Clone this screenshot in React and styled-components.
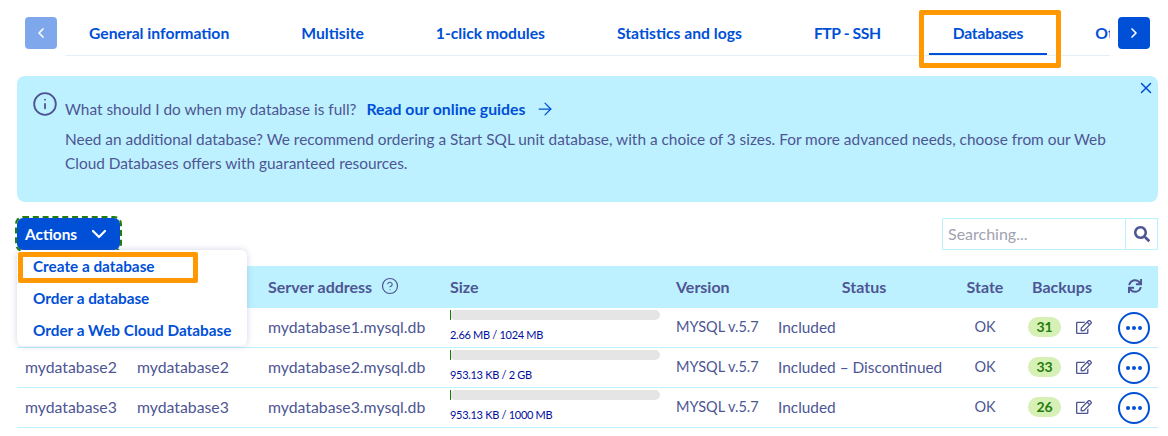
import * as React from "react";
import styled, { createGlobalStyle } from "styled-components";
import { ChevronLeft, ChevronRight, ChevronDown, ArrowRight, Info, X, CircleHelp } from "lucide-react";
import { FaSearch, FaSync, FaRegEdit } from "react-icons/fa";

const TABS = [
  { label: "General information" },
  { label: "Multisite" },
  { label: "1-click modules" },
  { label: "Statistics and logs" },
  { label: "FTP - SSH", tight: "-0.4px" },
  { label: "Databases", tight: "-0.2px", active: true },
  { label: "Other" },
];

const ROWS = [
  { name: "mydatabase1", user: "mydatabase1", server: "mydatabase1.mysql.db", size: "2.66 MB / 1024 MB", status: "Included", backups: 31 },
  { name: "mydatabase2", user: "mydatabase2", server: "mydatabase2.mysql.db", size: "953.13 KB / 2 GB", status: "Included – Discontinued", backups: 33 },
  { name: "mydatabase3", user: "mydatabase3", server: "mydatabase3.mysql.db", size: "953.13 KB / 1000 MB", status: "Included", backups: 26 },
];

const GlobalStyle = createGlobalStyle`
  html, body {
    margin: 0;
    padding: 0;
    background: #fff;
    font-family: "Lato", "Noto Sans", sans-serif;
    color: #4d5693;
  }
`;

const Page = styled.div`
  position: relative;
  width: 1168px;
  height: 436px;
  overflow: hidden;
  box-sizing: border-box;
  padding: 17px 10px 0 17px;
`;

const TabBar = styled.div`
  display: flex;
  align-items: flex-start;
  gap: 8px;
  padding: 0 8px;
`;

const ArrowButton = styled.button`
  flex: none;
  width: 32px;
  height: 32px;
  display: flex;
  align-items: center;
  justify-content: center;
  padding: 0;
  border: none;
  border-radius: 4px;
  color: #fff;
  background: ${(p) => (p.$disabled ? "#7fa7eb" : "#0050d7")};
`;

const TabList = styled.div`
  flex: 1;
  min-width: 0;
  display: flex;
  gap: 24px;
  height: 39px;
  box-sizing: border-box;
  overflow: hidden;
  border-bottom: 1px solid #e6eff5;
`;

const Tab = styled.div`
  flex: none;
  height: 38px;
  box-sizing: border-box;
  padding: 0 24px;
  line-height: 32px;
  font-size: 15.7px;
  font-weight: 700;
  letter-spacing: ${(p) => p.$tight || "normal"};
  color: #0050d7;
  border-bottom: 2px solid ${(p) => (p.$active ? "#0050d7" : "transparent")};
`;

const TabHighlight = styled.div`
  position: absolute;
  left: 919px;
  top: 10px;
  width: 142px;
  height: 58px;
  box-sizing: border-box;
  border: 5px solid #ff9802;
  border-radius: 2px;
`;

const Banner = styled.div`
  position: relative;
  display: flex;
  gap: 7px;
  height: 126px;
  box-sizing: border-box;
  margin-top: 20px;
  padding: 15px 15px 0;
  background: #bef1ff;
  border-radius: 8px;
  font-size: 15.4px;
  line-height: 24px;
`;

const BannerBody = styled.div`
  flex: 1;
  padding-top: 6px;
`;

const BannerLead = styled.div`
  display: flex;
  align-items: center;
  gap: 10px;
  margin-bottom: 6px;
`;

const GuideLink = styled.a`
  display: inline-flex;
  align-items: center;
  gap: 10px;
  color: #0050d7;
  font-size: 15.8px;
  font-weight: 700;
`;

const BannerText = styled.p`
  margin: 0;
  width: 1060px;
`;

const CloseButton = styled.span`
  position: absolute;
  top: 3px;
  right: 3px;
  display: flex;
  color: #0050d7;
`;

const Toolbar = styled.div`
  display: flex;
  justify-content: space-between;
  align-items: center;
  margin-top: 16px;
`;

const ActionsWrap = styled.div`
  position: relative;
`;

const ActionsButton = styled.button`
  display: flex;
  align-items: center;
  gap: 10px;
  height: 32px;
  width: 103px;
  box-sizing: border-box;
  padding: 0 8px;
  border: none;
  border-radius: 6px;
  background: #0050d7;
  color: #fff;
  font-family: inherit;
  font-size: 15.4px;
  font-weight: 700;
  outline: 2px dashed #237d0d;
  outline-offset: 0;
`;

const Menu = styled.div`
  position: absolute;
  z-index: 2;
  top: 32px;
  left: 0;
  width: 230px;
  height: 96px;
  box-sizing: border-box;
  padding-top: 1px;
  background: #fff;
  border-radius: 6px;
  box-shadow: 0 0 6px rgba(77, 86, 147, 0.25);
`;

const MenuItem = styled.div`
  height: 32px;
  padding-left: 16px;
  line-height: 30px;
  font-size: 15.3px;
  font-weight: 700;
  color: #0050d7;
  white-space: nowrap;
`;

const MenuHighlight = styled.div`
  position: absolute;
  left: 1px;
  top: 2px;
  width: 180px;
  height: 31px;
  box-sizing: border-box;
  border: 5px solid #ff9802;
  border-radius: 2px;
`;

const SearchBox = styled.div`
  display: flex;
  width: 216px;
  height: 32px;
  box-sizing: border-box;
  border: 1px solid #bef1ff;
`;

const SearchInput = styled.input`
  flex: 1;
  min-width: 0;
  padding: 0 5px 2px;
  border: none;
  outline: none;
  font-family: inherit;
  font-size: 16px;
  color: #4d5693;
  &::placeholder {
    color: #a0a3b0;
    opacity: 1;
  }
`;

const SearchButton = styled.span`
  flex: none;
  width: 31px;
  display: flex;
  align-items: center;
  justify-content: center;
  border-left: 1px solid #bef1ff;
  color: #4d5693;
`;

const Table = styled.table`
  width: 100%;
  margin-top: 16px;
  table-layout: fixed;
  border-collapse: separate;
  border-spacing: 0;
  font-size: 15.8px;
`;

const HeadRow = styled.tr`
  height: 42px;
  background: #bef1ff;
`;

const HeadCell = styled.th`
  padding: 0 8px 2px;
  font-size: 16px;
  font-weight: 700;
  text-align: ${(p) => p.$align || "left"};
`;

const HeadLabel = styled.span`
  display: inline-flex;
  align-items: center;
  gap: 9px;
`;

const Row = styled.tr`
  height: 40px;
`;

const Cell = styled.td`
  box-sizing: border-box;
  padding: 0 8px 2px;
  white-space: nowrap;
  font-size: ${(p) => p.$size || "inherit"};
  text-align: ${(p) => p.$align || "left"};
  border-bottom: 1px solid #bef1ff;
`;

const SizeCell = styled(Cell)`
  vertical-align: top;
`;

const Bar = styled.div`
  height: 10px;
  margin-top: 2px;
  background: #e5e5e5;
  border-radius: 5px;
`;

const BarFill = styled.div`
  height: 100%;
  background: #237d0d;
`;

const SizeText = styled.div`
  margin-top: 7px;
  font-size: 11px;
  letter-spacing: -0.3px;
  line-height: 16px;
  color: #000e9c;
`;

const BackupRow = styled.div`
  display: flex;
  align-items: center;
  justify-content: flex-end;
  gap: 15px;
  padding-right: 12px;
`;

const Badge = styled.span`
  display: inline-block;
  width: 33px;
  height: 20px;
  line-height: 20px;
  text-align: center;
  border-radius: 10px;
  background: #d7f0b5;
  color: #237d0d;
  font-size: 14px;
  font-weight: 700;
`;

const ActionCell = styled(Cell)`
  padding: 0 0 0 6px;
`;

const RoundButton = styled.button`
  width: 32px;
  height: 32px;
  display: flex;
  align-items: center;
  justify-content: center;
  gap: 2px;
  padding: 0;
  background: #fff;
  border: 2px solid #0050d7;
  border-radius: 50%;
`;

const Dot = styled.i`
  width: 4px;
  height: 4px;
  border-radius: 50%;
  background: #0050d7;
`;

export default function App() {
  return (
    <Page>
      <GlobalStyle />
      <TabBar>
        <ArrowButton $disabled aria-label="Previous">
          <ChevronLeft size={16} strokeWidth={2.5} />
        </ArrowButton>
        <TabList>
          {TABS.map((t) => (
            <Tab key={t.label} $active={t.active} $tight={t.tight}>{t.label}</Tab>
          ))}
        </TabList>
        <ArrowButton aria-label="Next">
          <ChevronRight size={16} strokeWidth={2.5} />
        </ArrowButton>
      </TabBar>
      <TabHighlight />

      <Banner>
        <Info size={26} strokeWidth={1.7} />
        <BannerBody>
          <BannerLead>
            <span>What should I do when my database is full?</span>
            <GuideLink>
              Read our online guides <ArrowRight size={20} strokeWidth={1.5} />
            </GuideLink>
          </BannerLead>
          <BannerText>
            Need an additional database? We recommend ordering a Start SQL unit database, with a choice of 3 sizes. For more advanced needs, choose from our Web Cloud Databases offers with guaranteed resources.
          </BannerText>
        </BannerBody>
        <CloseButton><X size={18} strokeWidth={2} /></CloseButton>
      </Banner>

      <Toolbar>
        <ActionsWrap>
          <ActionsButton>
            Actions <ChevronDown size={24} strokeWidth={2.2} />
          </ActionsButton>
          <Menu>
            <MenuItem>Create a database</MenuItem>
            <MenuItem>Order a database</MenuItem>
            <MenuItem>Order a Web Cloud Database</MenuItem>
            <MenuHighlight />
          </Menu>
        </ActionsWrap>
        <SearchBox>
          <SearchInput placeholder="Searching..." />
          <SearchButton><FaSearch size={16} /></SearchButton>
        </SearchBox>
      </Toolbar>

      <Table>
        <colgroup>
          <col style={{ width: 112 }} />
          <col style={{ width: 131 }} />
          <col style={{ width: 182 }} />
          <col style={{ width: 226 }} />
          <col style={{ width: 102 }} />
          <col style={{ width: 188 }} />
          <col style={{ width: 54 }} />
          <col style={{ width: 100 }} />
          <col style={{ width: 46 }} />
        </colgroup>
        <thead>
          <HeadRow>
            <HeadCell>Name</HeadCell>
            <HeadCell>User</HeadCell>
            <HeadCell>
              <HeadLabel>Server address <CircleHelp size={18} strokeWidth={1.6} /></HeadLabel>
            </HeadCell>
            <HeadCell>Size</HeadCell>
            <HeadCell>Version</HeadCell>
            <HeadCell $align="center">Status</HeadCell>
            <HeadCell $align="center">State</HeadCell>
            <HeadCell $align="center">Backups</HeadCell>
            <HeadCell $align="center"><FaSync size={14} /></HeadCell>
          </HeadRow>
        </thead>
        <tbody>
          {ROWS.map((r) => (
            <Row key={r.name}>
              <Cell>{r.name}</Cell>
              <Cell>{r.user}</Cell>
              <Cell>{r.server}</Cell>
              <SizeCell>
                <Bar><BarFill style={{ width: 1 }} /></Bar>
                <SizeText>{r.size}</SizeText>
              </SizeCell>
              <Cell $size="14.5px">MYSQL v.5.7</Cell>
              <Cell $size="15.4px">{r.status}</Cell>
              <Cell $align="center" $size="14.5px">OK</Cell>
              <Cell>
                <BackupRow>
                  <Badge>{r.backups}</Badge>
                  <FaRegEdit size={16} />
                </BackupRow>
              </Cell>
              <ActionCell>
                <RoundButton aria-label="More"><Dot /><Dot /><Dot /></RoundButton>
              </ActionCell>
            </Row>
          ))}
        </tbody>
      </Table>
    </Page>
  );
}
